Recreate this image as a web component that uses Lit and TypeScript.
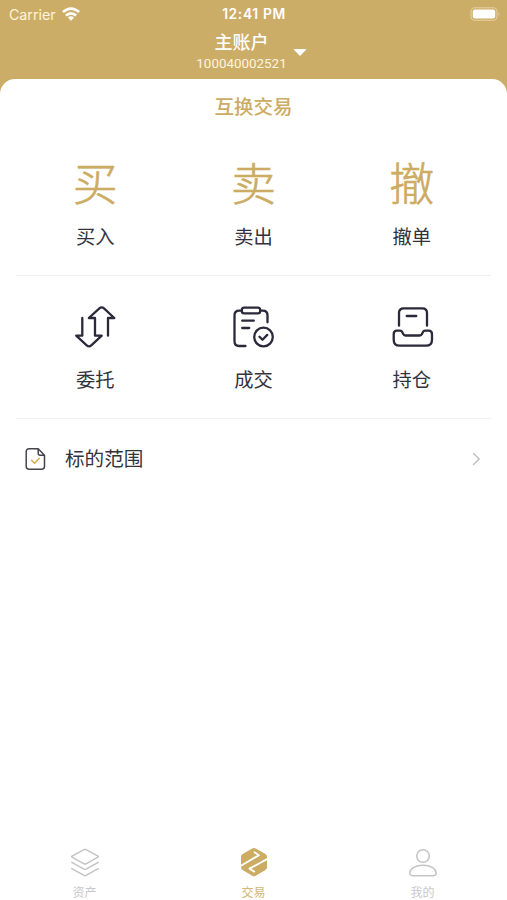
import { LitElement, html, css, svg } from "lit";
import { customElement } from "lit/decorators.js";

const orders = svg`<path d="M9.3 13V30.7H3.2L13.7 40.3Q16 42.4 18.3 40.3L28.7 30.7H22V13H15.8L26.4 3.4Q28.7 1.3 31 3.4L41.3 13H35V30.7"/>`;
const deals = svg`<path d="M10.8 5.7H8.2Q3.5 5.7 3.5 10.4V36.3Q3.5 41 8.2 41H14.5M29.2 5.7H31.8Q36.5 5.7 36.5 10.4V17.3"/><rect x="10.8" y="2.7" width="18.4" height="5.6" rx="2.4"/><path d="M11.2 15.7H22.8M11.2 23H18.2M28.5 31.7L31.5 34.7L36.2 29.9"/><circle cx="32.5" cy="32" r="9.3"/>`;
const holdings = svg`<path d="M9 20.7V8Q9 3.3 13.7 3.3H32.3Q37 3.3 37 8V20.7M16.7 11H26.3M7 25.7H10Q11.7 25.7 12.4 27.3L13.2 29Q13.9 30.5 15.5 30.5H29.7Q31.3 30.5 32 29L32.8 27.3Q33.5 25.7 35.2 25.7H38.5Q42 25.7 42 29.2V34.7Q42 40.7 36 40.7H9.7Q3.7 40.7 3.7 34.7V29.2Q3.7 25.7 7 25.7Z"/>`;

@customElement("app-root")
export class AppRoot extends LitElement {
  static styles = css`
    :host {
      display: flex;
      flex-direction: column;
      height: 900px;
      box-sizing: border-box;
      background: #ccad68;
      color: #34333d;
      font-family: "Noto Sans CJK SC", sans-serif;
    }
    svg { display: block; fill: none; stroke-linecap: round; stroke-linejoin: round; }
    .status {
      display: grid;
      grid-template-columns: 1fr auto 1fr;
      align-items: center;
      height: 27px;
      padding: 0 6px 0 9px;
      color: #fff;
      font: 14.2px/27px Inter, sans-serif;
    }
    .carrier { display: flex; align-items: center; gap: 6px; color: #fff4dc; }
    .wifi { stroke: #fff; stroke-width: 2.7; stroke-linecap: butt; }
    .time { padding-top: 1px; font-size: 13.8px; font-weight: 600; letter-spacing: 0.65px; margin-right: 2px; }
    .battery { justify-self: end; }
    .account {
      display: flex;
      justify-content: center;
      gap: 6px;
      height: 52px;
      padding-right: 4px;
      color: #fff;
    }
    .names { text-align: center; }
    .name { font-size: 18px; line-height: 29px; font-weight: 500; }
    .number { font: 13.4px/15px Roboto, sans-serif; color: #fff4dc; }
    .caret { margin-top: 21px; }
    .sheet {
      flex: 1;
      display: flex;
      flex-direction: column;
      background: #fff;
      border-radius: 15px 15px 0 0;
    }
    .title {
      height: 54px;
      line-height: 54px;
      text-align: center;
      font-size: 19.5px;
      font-weight: 500;
      color: #ccab62;
    }
    .grid {
      display: grid;
      grid-template-columns: repeat(3, 1fr);
      margin: 0 16px;
      height: 142px;
      border-bottom: 1px solid #f0f0f2;
    }
    .cell { display: flex; flex-direction: column; align-items: center; }
    .glyph {
      height: 44px;
      margin-top: 29px;
      line-height: 40px;
      font-size: 45px;
      font-weight: 300;
      color: #ccab62;
      -webkit-text-stroke: 0.6px #ccab62;
    }
    .icon { width: 44px; height: 44px; margin-top: 29px; stroke: #2b293a; stroke-width: 2.3; }
    .label { margin-top: 15px; font-size: 19.3px; line-height: 31px; }
    .row {
      display: flex;
      align-items: center;
      height: 79px;
      padding: 0 26px 0 24px;
      font-size: 19.6px;
    }
    .row-label { flex: 1; margin-left: 18px; padding-bottom: 3px; }
    .tabs { display: grid; grid-template-columns: repeat(3, 1fr); margin-top: auto; height: 55px; }
    .tab {
      display: flex;
      flex-direction: column;
      align-items: center;
      gap: 5px;
      font-size: 12px;
      line-height: 18px;
      color: #c8c8cc;
    }
    .tab svg { stroke: #c4c4c7; stroke-width: 1.5; }
    .active { color: #d3b675; }
  `;

  private glyphCell(glyph: string, label: string) {
    return html`<div class="cell"><div class="glyph">${glyph}</div><div class="label">${label}</div></div>`;
  }

  private iconCell(icon: unknown, label: string) {
    return html`<div class="cell"><svg class="icon" viewBox="0 0 44 44">${icon}</svg><div class="label">${label}</div></div>`;
  }

  render() {
    return html`
      <div class="status">
        <div class="carrier">
          Carrier
          <svg class="wifi" width="18" height="14" viewBox="0 0 18 14">
            <path d="M0.9 5.1Q9-2 17.1 5.1M3.9 8.6Q9 4.2 14.1 8.6" />
            <path d="M5.9 10.6Q9 8 12.1 10.6L9 13.7Z" fill="#fff" stroke="none" />
          </svg>
        </div>
        <div class="time">12:41 PM</div>
        <svg class="battery" width="31" height="14" viewBox="0 0 31 14">
          <rect x="1" y="0.8" width="26" height="12.4" rx="3.8" stroke="#e6cf9e" stroke-width="1.1" />
          <rect x="2.8" y="2.5" width="22.4" height="9" rx="2" fill="#fff" />
          <path d="M28.6 5.2Q30.5 7 28.6 8.8Z" fill="#e6cf9e" />
        </svg>
      </div>
      <div class="account">
        <div class="names">
          <div class="name">主账户</div>
          <div class="number">100040002521</div>
        </div>
        <svg class="caret" width="14" height="9" viewBox="0 0 14 9"><path d="M1.5 1.5H12.5L7 7.2Z" fill="#fff" stroke="#fff" stroke-width="1.2" /></svg>
      </div>
      <div class="sheet">
        <div class="title">互换交易</div>
        <div class="grid">
          ${this.glyphCell("买", "买入")} ${this.glyphCell("卖", "卖出")} ${this.glyphCell("撤", "撤单")}
        </div>
        <div class="grid">
          ${this.iconCell(orders, "委托")} ${this.iconCell(deals, "成交")} ${this.iconCell(holdings, "持仓")}
        </div>
        <div class="row">
          <svg width="23" height="24" viewBox="0 0 23 24" stroke="#45444d" stroke-width="1.5">
            <path d="M5.2 1.8H14.2L20.5 8.3V19.3Q20.5 22.3 17.5 22.3H5.2Q2.2 22.3 2.2 19.3V4.8Q2.2 1.8 5.2 1.8ZM14.2 1.8V6.3Q14.2 8.3 16.2 8.3H20.5" />
            <path d="M7.6 13.3L10.5 16.2L15.3 11.3" stroke="#d2aa50" />
          </svg>
          <div class="row-label">标的范围</div>
          <svg width="9" height="14" viewBox="0 0 9 14" stroke="#bbb" stroke-width="1.3"><path d="M1.5 1.5L7.3 7L1.5 12.5" /></svg>
        </div>
        <div class="tabs">
          <div class="tab">
            <svg width="30" height="33" viewBox="0 0 30 33">
              <path d="M14 4.6Q15 4.1 16 4.6L28 11.2Q28.7 11.7 28 12.2L16 18.8Q15 19.3 14 18.8L2 12.2Q1.3 11.7 2 11.2ZM1.8 17.4L14 24.2Q15 24.7 16 24.2L28.2 17.4M1.8 23.6L14 30.4Q15 30.9 16 30.4L28.2 23.6" />
            </svg>
            资产
          </div>
          <div class="tab active">
            <svg width="30" height="33" viewBox="0 0 30 33">
              <path d="M13.3 3.5Q15 2.5 16.7 3.5L26.4 9Q28 10 28 11.8V22.2Q28 24 26.4 25L16.7 30.7Q15 31.7 13.3 30.7L3.6 25Q2 24 2 22.2V11.8Q2 10 3.6 9Z" fill="#ccab62" stroke="none" />
              <path d="M1.5 21L20 10.2L15.5 7.3M28.5 13.8L10.5 23.7L15.2 26.6" stroke="#fff" stroke-width="1.9" />
            </svg>
            交易
          </div>
          <div class="tab">
            <svg width="30" height="33" viewBox="0 0 30 33">
              <circle cx="15" cy="11" r="6.3" />
              <path d="M5 30.8Q1.8 30.8 1.8 27.8C2.3 23.5 7.5 20.2 15 20.2S27.7 23.5 28.2 27.8Q28.2 30.8 25 30.8Z" />
            </svg>
            我的
          </div>
        </div>
      </div>
    `;
  }
}
